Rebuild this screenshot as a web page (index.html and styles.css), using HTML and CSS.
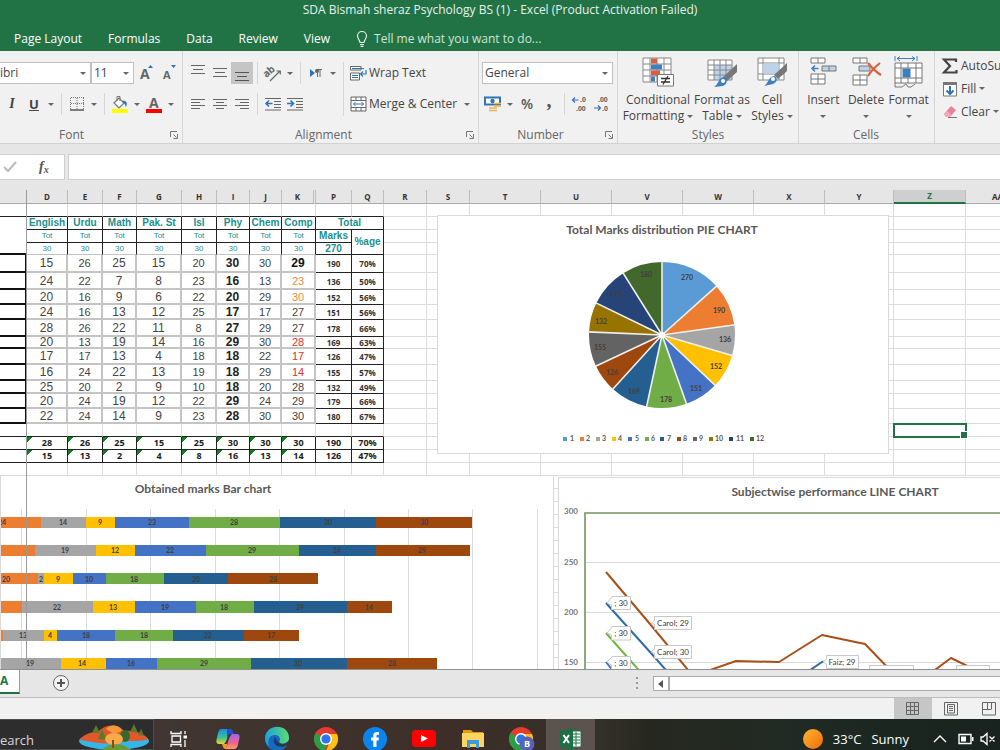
FILE: index.html
```html
<!DOCTYPE html>
<html lang="en">
<head>
<meta charset="utf-8">
<title>SDA Bismah sheraz Psychology BS (1) - Excel</title>
<link rel="stylesheet" href="styles.css">
</head>
<body>
<header class="top">
  <h1 class="title">SDA Bismah sheraz Psychology BS (1) - Excel (Product Activation Failed)</h1>
  <nav class="tabs">
    <a href="#">Page Layout</a><a href="#">Formulas</a><a href="#">Data</a><a href="#">Review</a><a href="#">View</a>
    <a href="#" class="tell"><svg width="12" height="16" viewBox="0 0 12 16" fill="none" stroke="#e4efe8" stroke-width="1.2"><path d="M4 11.500C4 9 1.500 8 1.500 5a4.500 4.500 0 0 1 9 0C10.500 8 8 9 8 11.500ZM4 13.500H8M4.500 15.300H7.500"/></svg>Tell me what you want to do...</a>
  </nav>
</header>

<section class="ribbon">
  <div class="group font">
    <div class="row">
      <span class="pick family"><select aria-label="Font"><option>ibri</option></select></span>
      <span class="pick size"><select aria-label="Font size"><option>11</option></select></span>
      <button class="b grow" aria-label="Increase font size"><svg width="16" height="18"><text x="1" y="15" font-size="14" font-weight="bold" fill="#666">A</text><path d="M9 4L11.500 1L14 4Z" fill="#2f74b5"/></svg></button>
      <button class="b" aria-label="Decrease font size"><svg width="16" height="18"><text x="2" y="15" font-size="11" font-weight="bold" fill="#666">A</text><path d="M10 1H15L12.500 4Z" fill="#2f74b5"/></svg></button>
    </div>
    <div class="row">
      <button class="b ital">I</button><button class="b under">U</button><button class="dd" aria-label="Underline options"></button>
      <i class="sep"></i>
      <button class="b" aria-label="Borders"><svg width="14" height="14"><path d="M1 .5H14M.5 1V12M13.500 1V12M7 1V12M1 6.500H14" stroke="#777" stroke-dasharray="1 1"/><path d="M0 13H14" stroke="#555" stroke-width="1.500"/></svg></button><button class="dd" aria-label="Border options"></button>
      <i class="sep"></i>
      <button class="b" aria-label="Fill color"><svg width="18" height="18"><path d="M3 8L8 3L13 8L8 13Z" fill="#fff" stroke="#777" stroke-width="1.200"/><path d="M6 6V1.500H9V6" fill="none" stroke="#777"/><path d="M11 6C15 5 17 8 15 12C14 10 14 8 11 7Z" fill="#2f74b5"/><path d="M1 14H17V18H1Z" fill="#ff0"/></svg></button><button class="dd" aria-label="Fill options"></button>
      <button class="b" aria-label="Font color"><svg width="18" height="18"><text x="4" y="13" font-size="14" font-weight="bold" fill="#666">A</text><path d="M1 14H17V18H1Z" fill="#f00"/></svg></button><button class="dd" aria-label="Font color options"></button>
    </div>
    <footer>Font<svg class="launch" width="8" height="8"><path d="M.5 6V.5H7M3.500 3.500L6.500 6.500M7.500 3V7.500H3.500" fill="none" stroke="#777"/></svg></footer>
  </div>

  <div class="group align">
    <div class="cols">
      <div class="acol">
        <div class="row">
          <button class="b" aria-label="Top align"><svg width="16" height="16"><path d="M1 .5H15M3 4.500H13M1 8.500H15" stroke="#666"/></svg></button>
          <button class="b" aria-label="Middle align"><svg width="16" height="16"><path d="M1 3.500H15M3 7.500H13M1 11.500H15" stroke="#666"/></svg></button>
          <button class="b on" aria-label="Bottom align"><svg width="16" height="16"><path d="M1 7.500H15M3 11.500H13M1 15.500H15" stroke="#555"/></svg></button>
          <i class="sep"></i>
          <button class="b" aria-label="Orientation"><svg width="18" height="18"><text x="0" y="12" font-size="10" font-weight="bold" fill="#666" transform="rotate(-40 4 10)">ab</text><path d="M6 17L16 7M12.500 7H16.300V10.500" fill="none" stroke="#666" stroke-width="1.200"/></svg></button><button class="dd" aria-label="Orientation options"></button>
          <i class="sep"></i>
          <button class="b" aria-label="Text direction"><svg width="14" height="14"><path d="M1 3L6 7L1 11Z" fill="#2f74b5"/><path d="M8.500 3V11M11 3V11M7 3.500H13" fill="none" stroke="#666"/><circle cx="8" cy="5" r="2" fill="#666"/></svg></button><button class="dd" aria-label="Direction options"></button>
        </div>
        <div class="row">
          <button class="b" aria-label="Align left"><svg width="16" height="14"><path d="M1 2.500H15M1 5.500H10M1 8.500H15M1 11.500H10" stroke="#666"/></svg></button>
          <button class="b" aria-label="Center"><svg width="16" height="14"><path d="M1 2.500H15M4 5.500H12M1 8.500H15M4 11.500H12" stroke="#666"/></svg></button>
          <button class="b" aria-label="Align right"><svg width="16" height="14"><path d="M1 2.500H15M6 5.500H15M1 8.500H15M6 11.500H15" stroke="#666"/></svg></button>
          <i class="sep"></i>
          <button class="b" aria-label="Decrease indent"><svg width="16" height="14"><path d="M0 1.500H16M9 4.500H16M9 7.500H16M9 10.500H16M0 13H16" stroke="#666"/><path d="M7.500 6.500H1M4 3.500L1 6.500L4 9.500" fill="none" stroke="#2f74b5" stroke-width="1.600"/></svg></button>
          <button class="b" aria-label="Increase indent"><svg width="16" height="14"><path d="M0 1.500H16M9 4.500H16M9 7.500H16M9 10.500H16M0 13H16" stroke="#666"/><path d="M0 6.500H6.500M3.500 3.500L6.500 6.500L3.500 9.500" fill="none" stroke="#2f74b5" stroke-width="1.600"/></svg></button>
        </div>
      </div>
      <i class="sep tall"></i>
      <div class="acol">
        <div class="row"><button class="wide"><svg width="17" height="16"><path d="M.5 1.500H11V5H.5ZM.5 8H9.500V15H.5Z" fill="#fff" stroke="#666"/><path d="M2 3.500H14M2 10.500H8M2 12.500H8" stroke="#2f74b5"/><path d="M16 5V9H11M13 6.500L10.500 9L13 11.500" fill="none" stroke="#2f74b5" stroke-width="1.200"/></svg>Wrap Text</button></div>
        <div class="row"><button class="wide"><svg width="17" height="16"><path d="M1 1H16V15H1ZM1 4.500H16M1 11.500H16M6 1V4.500M11 1V4.500M6 11.500V15M11 11.500V15" fill="#fff" stroke="#666"/><path d="M3.500 8H13.500M5.500 6L3.500 8L5.500 10M11.500 6L13.500 8L11.500 10" fill="none" stroke="#2f74b5"/></svg>Merge &amp; Center</button><button class="dd" aria-label="Merge options"></button></div>
      </div>
    </div>
    <footer>Alignment<svg class="launch" width="8" height="8"><path d="M.5 6V.5H7M3.500 3.500L6.500 6.500M7.500 3V7.500H3.500" fill="none" stroke="#777"/></svg></footer>
  </div>

  <div class="group number">
    <div class="row"><span class="pick format"><select aria-label="Number format"><option>General</option></select></span></div>
    <div class="row">
      <button class="b" aria-label="Accounting format"><svg width="18" height="16"><path d="M1 1.500H16V8.500H1Z" fill="#fff" stroke="#2f74b5" stroke-width="2"/><circle cx="8.500" cy="5" r="2.200" fill="#2f74b5"/><path d="M10 7.500H17M10 10H17M5 12H13M5 14.500H13" stroke="#e9b455" stroke-width="1.700"/></svg></button><button class="dd" aria-label="Currency options"></button>
      <button class="b pct">%</button><button class="b comma">,</button>
      <i class="sep"></i>
      <button class="b dec" aria-label="Increase decimal"><svg width="18" height="16"><text x="9" y="6">.0</text><text x="5" y="15">.00</text><path d="M7.500 4H1.500M4 1.500L1.500 4L4 6.500" fill="none" stroke="#2f74b5" stroke-width="1.200"/></svg></button>
      <button class="b dec" aria-label="Decrease decimal"><svg width="18" height="16"><text x="5" y="6">.00</text><text x="9" y="15">.0</text><path d="M1 12H7.500M5 9.500L7.500 12L5 14.500" fill="none" stroke="#2f74b5" stroke-width="1.200"/></svg></button>
    </div>
    <footer>Number<svg class="launch" width="8" height="8"><path d="M.5 6V.5H7M3.500 3.500L6.500 6.500M7.500 3V7.500H3.500" fill="none" stroke="#777"/></svg></footer>
  </div>

  <div class="group styles">
    <div class="bigs">
      <button class="big cond"><svg width="32" height="32"><path d="M1 2H29V26H1ZM1 8H29M1 14H29M1 20H29M8 2V26M15 2V26M22 2V26" fill="#fff" stroke="#888"/><path d="M9 2.500H15V7.500H9ZM9 14.500H18V19.500H9Z" fill="#dd5e3c"/><path d="M9 8.500H20V13.500H9ZM9 20.500H13V25.500H9Z" fill="#3f7fc0"/><path d="M15.500 18.500H31.500V30H15.500Z" fill="#fff" stroke="#777"/><path d="M19 22.500H28M19 26H28M26 20L21 28.500" stroke="#333" stroke-width="1.300"/></svg><span>Conditional<br>Formatting <i class="tri"></i></span></button>
      <button class="big fat"><svg width="32" height="32"><path d="M2 4H26V24H2Z" fill="#fff"/><path d="M8 9H26V24H8Z" fill="#bcd3ea"/><path d="M2 4H26V24H2ZM2 9H26M2 14H26M2 19H26M8 4V24M14 4V24M20 4V24" fill="none" stroke="#888"/><path d="M31 8V16L21 25L17 21Z" fill="#777"/><path d="M18 21C22 22 22 28 17 30L8 31C13 28 12 22 18 21Z" fill="#3f7fc0"/><circle cx="17" cy="25" r="2" fill="#fff"/></svg><span>Format as<br>Table <i class="tri"></i></span></button>
      <button class="big cell"><svg width="32" height="32"><path d="M2 2H28V24H2ZM7 2V24M23 2V24M2 7H28M2 18H28" fill="#fff" stroke="#888"/><path d="M7.500 7.500H22.500V17.500H7.500Z" fill="#bcd3ea"/><path d="M31 7V15L22 23L18 19Z" fill="#777"/><path d="M18 20C22 21 22 26 17 28L8 30C13 27 12 21 18 20Z" fill="#3f7fc0"/><circle cx="17" cy="23" r="2" fill="#fff"/></svg><span>Cell<br>Styles <i class="tri"></i></span></button>
    </div>
    <footer>Styles</footer>
  </div>

  <div class="group cells">
    <div class="bigs">
      <button class="big mid"><svg width="30" height="32"><path d="M3 2H17V7H3ZM10 2V7M3 18H17V28H3ZM10 18V28M3 23H17" fill="#fff" stroke="#777"/><path d="M14 10H28V15H14ZM21 10V15" fill="#bcd3ea" stroke="#777"/><path d="M10.500 12.500H4M7 9.500L4 12.500L7 15.500" fill="none" stroke="#3f7fc0" stroke-width="1.500"/></svg><span>Insert<br><i class="tri"></i></span></button>
      <button class="big mid"><svg width="32" height="32"><path d="M3 2H17V7H3ZM10 2V7M3 19H17V29H3ZM10 19V29M3 24H17" fill="#fff" stroke="#777"/><path d="M9 10H20V15H9Z" fill="#bcd3ea" stroke="#777"/><path d="M18 7C22 12 26 16 31 19M30 7C25 11 21 15 18 20" fill="none" stroke="#dd5e3c" stroke-width="2.200"/></svg><span>Delete<br><i class="tri"></i></span></button>
      <button class="big mid"><svg width="30" height="32"><path d="M1 7H28V27H1ZM7 7V27M22 7V27M1 12H28M1 22H28M14 7V12M14 22V27" fill="#fff" stroke="#777"/><path d="M8.500 12.500H16.500V21.500H8.500Z" fill="#3f7fc0"/><path d="M1 27V31H8L12 28L14 31H17L21 28" fill="none" stroke="#777"/><path d="M1 0V5M23 0V5M3 2.500H21M6 .5L3 2.500L6 5M18 .5L21 2.500L18 5" fill="none" stroke="#3f7fc0"/></svg><span>Format<br><i class="tri"></i></span></button>
    </div>
    <footer>Cells</footer>
  </div>

  <div class="group edit">
    <button class="cmd"><svg width="16" height="16"><path d="M14 4V1.500H2L8 8L2 14.500H14.500V12" fill="none" stroke="#444" stroke-width="2.200"/></svg>AutoSum</button>
    <button class="cmd"><svg width="16" height="16"><path d="M1.500 1.500H14.500V15H1.500Z" fill="#fff" stroke="#777"/><path d="M1 1H15V4H1Z" fill="#777"/><path d="M8 5V13M4.500 9.500L8 13L11.500 9.500" fill="none" stroke="#2f74b5" stroke-width="2"/></svg>Fill <i class="tri"></i></button>
    <button class="cmd"><svg width="16" height="16"><path d="M2 10L9 2L14 6L8 13H4Z" fill="#ea8297"/><path d="M2 10L5 7L10 11L8 13H4Z" fill="#f3a9b7"/><path d="M6 13.500H15" stroke="#777"/></svg>Clear <i class="tri"></i></button>
  </div>
</section>

<section class="formula">
  <div class="fx"><svg width="14" height="12"><path d="M1 6L5 10L13 1" fill="none" stroke="#bbb" stroke-width="2"/></svg><button class="fxb">f<sub>x</sub></button></div>
  <input class="entry" type="text" aria-label="Formula bar">
</section>

<main class="sheet">
<table class="grid">
<colgroup><col class="w27"><col class="w41"><col class="w35"><col class="w34"><col class="w45"><col class="w35"><col class="w33"><col class="w32"><col class="w34"><col class="w36"><col class="w32"><col class="w43"><col class="w43"><col class="w71"><col class="w71"><col class="w71"><col class="w71"><col class="w71"><col class="w69"><col class="w72"><col class="w64"></colgroup>
<thead><tr><th></th><th>D</th><th>E</th><th>F</th><th>G</th><th>H</th><th>I</th><th>J</th><th class="hid">K</th><th>P</th><th>Q</th><th>R</th><th>S</th><th>T</th><th>U</th><th>V</th><th>W</th><th>X</th><th>Y</th><th class="cur">Z</th><th>AA</th></tr></thead>
<tbody class="head">
<tr class="h13 edge"><td><td><td><td><td><td><td><td><td><td><td><td class="o"><td class="o"><td class="o"><td class="o"><td class="o"><td class="o"><td class="o"><td class="o"><td class="o"><td class="o"></tr>
<tr class="h13 sub"><td class="n"><td>English<td>Urdu<td>Math<td>Pak. St<td>Isl<td>Phy<td>Chem<td>Comp<td colspan="2">Total<td class="o"><td class="o"><td class="o"><td class="o"><td class="o"><td class="o"><td class="o"><td class="o"><td class="o"><td class="o"></tr>
<tr class="h13 tot"><td class="n"><td>Tot<td>Tot<td>Tot<td>Tot<td>Tot<td>Tot<td>Tot<td>Tot<td class="m">Marks<td class="m" rowspan="2">%age<td class="o"><td class="o"><td class="o"><td class="o"><td class="o"><td class="o"><td class="o"><td class="o"><td class="o"><td class="o"></tr>
<tr class="h12 tot last"><td class="n k"><td>30<td>30<td>30<td>30<td>30<td>30<td>30<td>30<td class="m">270<td class="o"><td class="o"><td class="o"><td class="o"><td class="o"><td class="o"><td class="o"><td class="o"><td class="o"><td class="o"></tr>
</tbody>
<tbody class="data">
<tr class="h18"><td><td>15<td>26<td>25<td>15<td>20<td>30<td>30<td class="bd">29<td>190<td>70%<td><td><td><td><td><td><td><td><td><td></tr>
<tr class="h17"><td><td>24<td>22<td>7<td>8<td>23<td>16<td>13<td class="or">23<td>136<td>50%<td><td><td><td><td><td><td><td><td><td></tr>
<tr class="h15"><td><td>20<td>16<td>9<td>6<td>22<td>20<td>29<td class="or">30<td>152<td>56%<td><td><td><td><td><td><td><td><td><td></tr>
<tr class="h15"><td><td>24<td>16<td>13<td>12<td>25<td>17<td>17<td>27<td>151<td>56%<td><td><td><td><td><td><td><td><td><td></tr>
<tr class="h17"><td><td>28<td>26<td>22<td>11<td>8<td>27<td>29<td>27<td>178<td>66%<td><td><td><td><td><td><td><td><td><td></tr>
<tr class="h12"><td><td>20<td>13<td>19<td>14<td>16<td>29<td>30<td class="rd">28<td>169<td>63%<td><td><td><td><td><td><td><td><td><td></tr>
<tr class="h16"><td><td>17<td>17<td>13<td>4<td>18<td>18<td>22<td class="rd">17<td>126<td>47%<td><td><td><td><td><td><td><td><td><td></tr>
<tr class="h16"><td><td>16<td>24<td>22<td>13<td>19<td>18<td>29<td class="rd">14<td>155<td>57%<td><td><td><td><td><td><td><td><td><td></tr>
<tr class="h13"><td><td>25<td>20<td>2<td>9<td>10<td>18<td>20<td>28<td>132<td>49%<td><td><td><td><td><td><td><td><td><td></tr>
<tr class="h15"><td><td>20<td>24<td>19<td>12<td>22<td>29<td>24<td>29<td>179<td>66%<td><td><td><td><td><td><td><td><td><td></tr>
<tr class="h15"><td><td>22<td>24<td>14<td>9<td>23<td>28<td>30<td>30<td>180<td>67%<td><td><td><td><td><td><td><td><td><td></tr>
</tbody>
<tbody class="sum">
<tr class="h13 edge"><td><td><td><td><td><td><td><td><td><td><td><td class="o"><td class="o"><td class="o"><td class="o"><td class="o"><td class="o"><td class="o"><td class="o"><td class="o sel"><td class="o"></tr>
<tr class="h13"><td><td>28<td>26<td>25<td>15<td>25<td>30<td>30<td>30<td>190<td>70%<td class="o"><td class="o"><td class="o"><td class="o"><td class="o"><td class="o"><td class="o"><td class="o"><td class="o"><td class="o"></tr>
<tr class="h13"><td><td>15<td>13<td>2<td>4<td>8<td>16<td>13<td>14<td>126<td>47%<td class="o"><td class="o"><td class="o"><td class="o"><td class="o"><td class="o"><td class="o"><td class="o"><td class="o"><td class="o"></tr>
</tbody>
<tbody>
<tr class="h13"><td><td><td><td><td><td><td><td><td><td><td><td><td><td><td><td><td><td><td><td><td></tr>
<tr class="h13"><td colspan="21"></tr><tr class="h13"><td colspan="21"></tr><tr class="h13"><td colspan="21"></tr><tr class="h13"><td colspan="21"></tr><tr class="h13"><td colspan="21"></tr><tr class="h13"><td colspan="21"></tr><tr class="h13"><td colspan="21"></tr><tr class="h13"><td colspan="21"></tr><tr class="h13"><td colspan="21"></tr><tr class="h13"><td colspan="21"></tr><tr class="h13"><td colspan="21"></tr><tr class="h13"><td colspan="21"></tr><tr class="h13"><td colspan="21"></tr><tr class="h13"><td colspan="21"></tr><tr class="h13"><td colspan="21"></tr>
</tbody>
</table>

<svg class="chart pie" width="452" height="239" viewBox="437 215 452 239" role="img" aria-label="Total Marks distribution PIE CHART">
  <text class="ct" x="662" y="234">Total Marks distribution PIE CHART</text>
  <g fill="none" stroke-width="73" transform="rotate(-90 662 335)">
    <circle cx="662" cy="335" r="36.5" pathLength="2018" stroke="#5b9bd5" stroke-dasharray="270 2018"/>
    <circle cx="662" cy="335" r="36.5" pathLength="2018" stroke="#ed7d31" stroke-dasharray="190 2018" stroke-dashoffset="-270"/>
    <circle cx="662" cy="335" r="36.5" pathLength="2018" stroke="#a5a5a5" stroke-dasharray="136 2018" stroke-dashoffset="-460"/>
    <circle cx="662" cy="335" r="36.5" pathLength="2018" stroke="#ffc000" stroke-dasharray="152 2018" stroke-dashoffset="-596"/>
    <circle cx="662" cy="335" r="36.5" pathLength="2018" stroke="#4472c4" stroke-dasharray="151 2018" stroke-dashoffset="-748"/>
    <circle cx="662" cy="335" r="36.5" pathLength="2018" stroke="#70ad47" stroke-dasharray="178 2018" stroke-dashoffset="-899"/>
    <circle cx="662" cy="335" r="36.5" pathLength="2018" stroke="#255e91" stroke-dasharray="169 2018" stroke-dashoffset="-1077"/>
    <circle cx="662" cy="335" r="36.5" pathLength="2018" stroke="#9e480e" stroke-dasharray="126 2018" stroke-dashoffset="-1246"/>
    <circle cx="662" cy="335" r="36.5" pathLength="2018" stroke="#636363" stroke-dasharray="155 2018" stroke-dashoffset="-1372"/>
    <circle cx="662" cy="335" r="36.5" pathLength="2018" stroke="#997300" stroke-dasharray="132 2018" stroke-dashoffset="-1527"/>
    <circle cx="662" cy="335" r="36.5" pathLength="2018" stroke="#264478" stroke-dasharray="179 2018" stroke-dashoffset="-1659"/>
    <circle cx="662" cy="335" r="36.5" pathLength="2018" stroke="#43682b" stroke-dasharray="180 2018" stroke-dashoffset="-1838"/>
  </g>
  <g stroke="#f0f0f0" stroke-width="1.6">
    <path d="M662 335V261"/><path d="M662 335V261" transform="rotate(48.17 662 335)"/><path d="M662 335V261" transform="rotate(82.06 662 335)"/><path d="M662 335V261" transform="rotate(106.32 662 335)"/><path d="M662 335V261" transform="rotate(133.44 662 335)"/><path d="M662 335V261" transform="rotate(160.38 662 335)"/><path d="M662 335V261" transform="rotate(192.13 662 335)"/><path d="M662 335V261" transform="rotate(222.28 662 335)"/><path d="M662 335V261" transform="rotate(244.76 662 335)"/><path d="M662 335V261" transform="rotate(272.41 662 335)"/><path d="M662 335V261" transform="rotate(295.96 662 335)"/><path d="M662 335V261" transform="rotate(327.89 662 335)"/>
  </g>
  <circle cx="662" cy="335" r="3" fill="#fff"/>
  <g class="lb"><text x="687" y="280">270</text><text x="719" y="313">190</text><text x="725" y="342">136</text><text x="716" y="369">152</text><text x="696" y="391">151</text><text x="666" y="402">178</text><text x="634" y="394">169</text><text x="612" y="375">126</text><text x="600" y="350">155</text><text x="601" y="324">132</text><text x="616" y="297">179</text><text x="646" y="277">180</text></g>
  <g><path fill="#5b9bd5" d="M563 437h4v4h-4z"/><path fill="#ed7d31" d="M580 437h4v4h-4z"/><path fill="#a5a5a5" d="M596 437h4v4h-4z"/><path fill="#ffc000" d="M612 437h4v4h-4z"/><path fill="#4472c4" d="M628 437h4v4h-4z"/><path fill="#70ad47" d="M645 437h4v4h-4z"/><path fill="#255e91" d="M660 437h4v4h-4z"/><path fill="#9e480e" d="M677 437h4v4h-4z"/><path fill="#636363" d="M693 437h4v4h-4z"/><path fill="#997300" d="M709 437h4v4h-4z"/><path fill="#264478" d="M729 437h4v4h-4z"/><path fill="#43682b" d="M750 437h4v4h-4z"/></g>
  <g class="lg"><text x="572" y="441">1</text><text x="588" y="441">2</text><text x="604" y="441">3</text><text x="620" y="441">4</text><text x="637" y="441">5</text><text x="653" y="441">6</text><text x="669" y="441">7</text><text x="685" y="441">8</text><text x="701" y="441">9</text><text x="719" y="441">10</text><text x="740" y="441">11</text><text x="760" y="441">12</text></g>
</svg>

<svg class="chart bar" width="554" height="210" viewBox="0 475 554 210" role="img" aria-label="Obtained marks Bar chart">
  <text class="ct" x="203" y="493">Obtained marks Bar chart</text>
  <path d="M21.500 509V685M86.500 509V685M150.500 509V685M215.500 509V685M279.500 509V685M344.500 509V685M408.500 509V685M472.500 509V685M537.500 509V685" stroke="#dcdcdc"/>
  <g fill="#ed7d31"><path d="M0 517H41V528H0zM0 545H35V556H0zM0 573H38V584H0zM0 601H22V613H0zM0 630H3V641H0z"/></g>
  <g fill="#a5a5a5"><path d="M41 517H86V528H41zM35 545H96V556H35zM38 573H44V584H38zM22 601H93V613H22zM3 630H44V641H3zM0 658H61V669H0z"/></g>
  <g fill="#ffc000"><path d="M86 517H115V528H86zM96 545H135V556H96zM44 573H73V584H44zM93 601H135V613H93zM44 630H57V641H44zM61 658H106V669H61z"/></g>
  <g fill="#4472c4"><path d="M115 517H189V528H115zM135 545H206V556H135zM73 573H106V584H73zM135 601H196V613H135zM57 630H115V641H57zM106 658H157V669H106z"/></g>
  <g fill="#70ad47"><path d="M189 517H280V528H189zM206 545H299V556H206zM106 573H164V584H106zM196 601H254V613H196zM115 630H173V641H115zM157 658H251V669H157z"/></g>
  <g fill="#255e91"><path d="M280 517H376V528H280zM299 545H376V556H299zM164 573H228V584H164zM254 601H347V613H254zM173 630H244V641H173zM251 658H347V669H251z"/></g>
  <g fill="#9e480e"><path d="M376 517H472V528H376zM376 545H470V556H376zM228 573H318V584H228zM347 601H392V613H347zM244 630H299V641H244zM347 658H437V669H347z"/></g>
  <g class="lb"><text x="2" y="525">24</text><text x="63" y="525">14</text><text x="100" y="525">9</text><text x="152" y="525">23</text><text x="234" y="525">28</text><text x="328" y="525">30</text><text x="424" y="525">30</text>
  <text x="65" y="553">19</text><text x="115" y="553">12</text><text x="170" y="553">22</text><text x="252" y="553">29</text><text x="337" y="553">24</text><text x="422" y="553">29</text>
  <text x="6" y="582">20</text><text x="41" y="582">2</text><text x="58" y="582">9</text><text x="89" y="582">10</text><text x="134" y="582">18</text><text x="196" y="582">20</text><text x="273" y="582">28</text>
  <text x="57" y="610">22</text><text x="113" y="610">13</text><text x="165" y="610">19</text><text x="224" y="610">18</text><text x="300" y="610">29</text><text x="369" y="610">14</text>
  <text x="23" y="638">13</text><text x="50" y="638">4</text><text x="86" y="638">18</text><text x="144" y="638">18</text><text x="208" y="638">22</text><text x="271" y="638">17</text>
  <text x="30" y="666">19</text><text x="82" y="666">14</text><text x="131" y="666">16</text><text x="204" y="666">29</text><text x="298" y="666">30</text><text x="392" y="666">28</text></g>
</svg>

<svg class="chart line" width="452" height="208" viewBox="558 477 452 208" role="img" aria-label="Subjectwise performance LINE CHART">
  <text class="ct" x="835" y="496">Subjectwise performance LINE CHART</text>
  <path d="M585 562.500H1010M585 612.500H1010M585 662.500H1010" stroke="#d9d9d9"/>
  <path d="M585 685V513H1010" fill="none" stroke="#76935f" stroke-width="1.600"/>
  <g class="ax"><text x="578" y="514">300</text><text x="578" y="565">250</text><text x="578" y="615">200</text><text x="578" y="665">150</text></g>
  <g fill="none" stroke-width="2" stroke-linejoin="round">
    <path d="M606 572L650 624L693 676L736 661L779 662L822 635L865 644L893 673L908 690L951 658L990 677" stroke="#a85018"/>
    <path d="M606 603L650 652L680 686M800 677L822 662L829 661" stroke="#2f6ca3"/>
    <path d="M606 633L652 685" stroke="#70b544"/>
    <path d="M606 662L622 682" stroke="#4472c4"/>
  </g>
  <g fill="#fff" stroke="#c8c8c8">
    <path d="M607 603L612 597V596.500H630.500V609.500H611.500V605Z"/><path d="M607 633L612 627V626.500H630.500V640H611.500V635Z"/><path d="M607 662L612 657V656.500H630.500V670H611.500V665Z"/>
    <path d="M651 624L654.500 620V616.500H691.500V629.500H654.500V624Z"/><path d="M651 652L654.500 649V645.500H691.500V658.500H654.500V653Z"/><path d="M823 662L826.500 659V655.500H858.500V668.500H826.500V664Z"/>
    <path d="M869.500 665.500H913.500V680H869.500ZM956.500 665.500H989.500V680H956.500Z"/>
  </g>
  <g class="lb call"><text x="621" y="606">; 30</text><text x="621" y="636">; 30</text><text x="621" y="666">; 30</text><text x="673" y="626">Carol; 29</text><text x="673" y="655">Carol; 30</text><text x="842" y="665">Faiz; 29</text></g>
</svg>
</main>

<section class="sheetbar">
  <button class="stab">A</button>
  <button class="plus" aria-label="New sheet"><svg width="18" height="18"><circle cx="9" cy="9" r="7.500" fill="#f4f4f4" stroke="#666"/><path d="M5 9H13M9 5V13" stroke="#555" stroke-width="2"/></svg></button>
  <svg class="dots" width="4" height="14"><path d="M1 2H3M1 7H3M1 12H3" stroke="#999" stroke-width="2"/></svg>
  <div class="scroll"><button aria-label="Scroll left"><svg width="8" height="8"><path d="M6 0V8L1 4Z" fill="#555"/></svg></button><div class="track"></div></div>
</section>

<section class="status">
  <button class="view on" aria-label="Normal"><svg width="14" height="14"><path d="M.5 .5H12.500V12.500H.5ZM4.500 .5V12.500M8.500 .5V12.500M.5 4.500H12.500M.5 8.500H12.500" fill="none" stroke="#666"/></svg></button>
  <button class="view" aria-label="Page layout"><svg width="14" height="14"><path d="M.5 .5H13.500V13H.5ZM3.500 2.500H10.500V11H3.500ZM5 4.500H9M5 6.500H9M5 8.500H9" fill="none" stroke="#666"/></svg></button>
  <button class="view" aria-label="Page break preview"><svg width="14" height="14"><path d="M.5 .5H13.500V13H.5ZM5.500 .5V7M9.500 .5V7M.5 7.500H9.500" fill="none" stroke="#666"/></svg></button>
</section>

<footer class="taskbar">
  <div class="search"><span>earch</span>
    <svg width="72" height="27"><ellipse cx="36" cy="17" rx="35" ry="9" fill="#35b6e8"/><path d="M2 16C8 7 18 9 22 6C30 -1 42 1 46 7C56 6 66 9 70 15C60 19 50 15 36 19C24 21 12 17 2 16Z" fill="#e4572a"/><path d="M28 5C33 -1 42 1 44 7L36 10Z" fill="#f59a3c"/><path d="M14 9L18 1L22 9ZM52 8L56 0L60 9ZM60 11L63 5L66 12ZM20 15L24 5L29 16Z" fill="#5b7a2a"/><ellipse cx="47" cy="12" rx="5" ry="6" fill="#35682f"/><ellipse cx="36" cy="15" rx="9" ry="6" fill="#fba94a"/><path d="M24 27C26 20 44 16 54 27Z" fill="#6d9a35"/><path d="M35 16V24" stroke="#8a4a1c" stroke-width="2"/></svg></div>
  <button class="app" aria-label="Task view"><svg width="18" height="18" fill="none" stroke="#fff" stroke-width="1.300"><path d="M1 1V3.500H11V1M1 17V14.500H11V17M2 6H10.500V12H2ZM15 1V4M15 10V17"/><path d="M13.500 5.500H17V8.500H13.500Z" fill="#fff" stroke="none"/></svg></button>
  <button class="app" aria-label="Copilot"><svg width="26" height="24"><defs><linearGradient id="ca" x1="0" y1="0" x2="0" y2="1"><stop offset="0" stop-color="#1b8be8"/><stop offset=".6" stop-color="#3fc58e"/><stop offset="1" stop-color="#f4d02c"/></linearGradient><linearGradient id="cb" x1="0" y1="0" x2="0" y2="1"><stop offset="0" stop-color="#a063f0"/><stop offset=".6" stop-color="#f06292"/><stop offset="1" stop-color="#fda057"/></linearGradient></defs><path d="M6 2H16C13 4 13 14 9 17H4C1 17 1 14 2 11C3 7 3 3 6 2Z" fill="url(#ca)"/><path d="M20 22H10C13 20 13 10 17 7H22C25 7 25 10 24 13C23 17 23 21 20 22Z" fill="url(#cb)"/><path d="M12 2H15C18 2 18 5 19 7H15C13 7 13 9 12 12Z" fill="#2450cf"/><path d="M8 17H12L13 14L11 22C8 22 8 19 7 17Z" fill="#ef9a2b"/></svg></button>
  <button class="app" aria-label="Edge"><svg width="26" height="26"><defs><linearGradient id="eg" x1="0" x2="1"><stop offset="0" stop-color="#1f9fe0"/><stop offset="1" stop-color="#5bdc6b"/></linearGradient></defs><circle cx="13" cy="13" r="12" fill="#1669bd"/><path d="M1 12C2 -3 25 -3 25 12C25 17 18 19 15 16C17 14 16 9 11 9C6 9 3 13 5 20C2 18 1 15 1 12Z" fill="url(#eg)"/><path d="M11 11C8 15 10 21 19 21L24 18C20 19 15 19 14 16Z" fill="#123f77"/><path d="M15 16C17 20 22 18 25 15L25 19L19 20C15 20 12 18 15 16Z" fill="#3e332c"/></svg></button>
  <button class="app" aria-label="Chrome"><svg width="26" height="26"><circle cx="13" cy="13" r="12" fill="#e33b2e"/><path d="M2.600 7L13 13L13 25A12 12 0 0 1 2.600 7Z" fill="#2a9d47"/><path d="M13 25L18 13L13 8H24A12 12 0 0 1 13 25Z" fill="#fbc116"/><circle cx="13" cy="13" r="6" fill="#fff"/><circle cx="13" cy="13" r="4.600" fill="#2f75e8"/></svg></button>
  <button class="app" aria-label="Facebook"><svg width="26" height="26"><circle cx="13" cy="13" r="12" fill="#0b84ee"/><path d="M11.300 21V14.500H9V11.500H11.300V9.500C11.300 6.500 13.500 5.600 17 6.200V8.900C15 8.700 14.500 9 14.500 10.200V11.500H17L16.500 14.500H14.500V21Z" fill="#fff"/></svg></button>
  <button class="app" aria-label="YouTube"><svg width="26" height="20"><rect x="1" y="1" width="24" height="17" rx="4" fill="#f00"/><path d="M10 6L17 9.500L10 13Z" fill="#fff"/></svg></button>
  <button class="app" aria-label="File Explorer"><svg width="24" height="22"><path d="M2 2H10L12 4H22V19H2Z" fill="#e09a10"/><path d="M1 5H23V19H1Z" fill="#fcd462"/><path d="M6 12H18V20H15V16H9V20H6Z" fill="#3b9bdc"/></svg></button>
  <button class="app" aria-label="Chrome profile B"><svg width="28" height="26"><circle cx="13" cy="13" r="12" fill="#e33b2e"/><path d="M2.600 7L13 13L13 25A12 12 0 0 1 2.600 7Z" fill="#2a9d47"/><path d="M13 25L18 13L13 8H24A12 12 0 0 1 13 25Z" fill="#fbc116"/><circle cx="13" cy="13" r="6" fill="#fff"/><circle cx="13" cy="13" r="4.600" fill="#2f75e8"/><circle cx="19" cy="18" r="7.500" fill="#5763b5"/><text x="16" y="21" font-size="9" font-weight="bold" fill="#fff">B</text></svg></button>
  <button class="app on" aria-label="Excel"><svg width="24" height="22"><path d="M12 3H22V19H12Z" fill="#fff" stroke="#1d7044"/><path d="M13 6H21M13 9H21M13 12H21M13 15H21M17 4V18" stroke="#1d7044"/><path d="M1 3L14 0V22L1 19Z" fill="#1d7044"/><path d="M4.500 7L10 15M10 7L4.500 15" stroke="#fff" stroke-width="2"/></svg></button>
  <div class="tray">
    <svg width="22" height="22"><defs><linearGradient id="sn" x1="0" y1="0" x2="1" y2="1"><stop offset="0" stop-color="#fdb72c"/><stop offset="1" stop-color="#f3690f"/></linearGradient></defs><circle cx="11" cy="11" r="10" fill="url(#sn)"/></svg>
    <span class="temp">33°C</span><span class="sky">Sunny</span>
    <svg width="14" height="10" fill="none" stroke="#fff" stroke-width="1.400"><path d="M1 8L7 2L13 8"/></svg>
    <svg class="bat" width="16" height="12"><path d="M1 1.500H13V10.500H1Z" fill="none" stroke="#fff" stroke-width="1.400"/><path d="M3 3.500H8V8.500H3ZM14 4H15.500V8H14Z" fill="#fff"/></svg>
    <svg class="spk" width="16" height="14" fill="none" stroke="#fff" stroke-width="1.300"><path d="M1 5H3L7 1.500V12.500L3 9H1ZM9.500 4.500L14.500 9.500M14.500 4.500L9.500 9.500"/></svg>
  </div>
</footer>
</body>
</html>
```
FILE: styles.css
```css
* { box-sizing: border-box; }
body {
  margin: 0;
  height: 100vh;
  display: flex;
  flex-direction: column;
  overflow: hidden;
  font: 12px/16px "Open Sans", "Noto Sans", sans-serif;
  color: #444;
  background: #e6e6e6;
}
button { border: 0; padding: 0; margin: 0; background: none; font: inherit; color: inherit; }
svg { display: block; flex: none; }
i { font-style: normal; }

/* title and tabs */
.top { background: #217346; color: #fff; flex: none; }
.title { margin: 0; font-size: 12px; line-height: 20px; font-weight: 400; text-align: center; color: #e8f2ec; }
.tabs { display: flex; gap: 26px; padding: 9px 14px 2px; line-height: 20px; white-space: nowrap; }
.tabs a { color: #fff; text-decoration: none; }
.tabs .tell { display: flex; align-items: center; gap: 6px; color: #cfe3d7; }

/* ribbon */
.ribbon { display: flex; flex: none; height: 93px; background: #f1f1f1; border-bottom: 1px solid #d2d2d2; overflow: hidden; white-space: nowrap; }
.ribbon svg { overflow: visible; }
.group { position: relative; flex: none; display: flex; flex-direction: column; gap: 9px; padding: 11px 4px 0; border-right: 1px solid #d6d6d6; }
.group footer { margin-top: auto; text-align: center; color: #666; }
.launch { position: absolute; right: 4px; bottom: 4px; }
.font { width: 183px; padding-left: 1px; padding-right: 0; }
.font footer { padding-right: 40px; }
.align { width: 296px; }
.align footer { padding-right: 14px; }
.number { width: 139px; padding-left: 3px; }
.number footer { padding-right: 14px; }
.styles { width: 181px; gap: 0; }
.cells { width: 136px; gap: 0; padding-left: 3px; }
.edit { flex: 1 0 66px; padding: 3px 0 0 7px; gap: 0; border: 0; }
.row { display: flex; align-items: center; height: 22px; }
.b { width: 22px; height: 22px; display: flex; align-items: center; justify-content: center; }
.b.on { background: #c5c5c5; }
.grow { margin-left: 2px; }
.sep { width: 1px; height: 22px; background: #d6d6d6; margin: 0 4px; flex: none; }
.sep.tall { height: 54px; margin-right: 3px; }
.cols { display: flex; }
.acol { display: flex; flex-direction: column; gap: 9px; }
.dd { width: 12px; height: 22px; display: flex; align-items: center; justify-content: center; }
.dd::after, .tri { content: ""; display: inline-block; border: 3px solid transparent; border-top-color: #666; border-bottom: 0; vertical-align: middle; }
.ital { font: italic bold 14px "Liberation Serif", serif; }
.under { font-weight: 700; font-size: 13px; text-decoration: underline; }
.pct { font-size: 14px; font-weight: 600; color: #555; }
.comma { font: bold 20px/10px "Liberation Serif", serif; padding-bottom: 8px; color: #555; }
.dec text { font: bold 7px "Liberation Sans", sans-serif; fill: #555; }
.pick { position: relative; display: block; }
.pick::after { content: ""; position: absolute; right: 5px; top: 10px; border: 3px solid transparent; border-top-color: #666; border-bottom: 0; }
.pick select { appearance: none; width: 100%; height: 22px; border: 1px solid #c0c0c0; border-radius: 0; background: #fff; font: inherit; color: #444; padding: 0 2px; }
.family { width: 91px; margin-left: -1px; }
.family select { border-left: 0; padding: 0; }
.size { width: 43px; }
.format { width: 131px; }
.wide { display: flex; align-items: center; gap: 2px; padding-left: 3px; }
.wide + .dd { margin-left: 4px; }
.bigs { display: flex; margin-top: -6px; }
.big { display: flex; flex-direction: column; align-items: center; gap: 4px; text-align: center; line-height: 16px; }
.cond { width: 72px; }
.fat { width: 56px; }
.cell { width: 44px; }
.mid { width: 43px; }
.cmd { display: flex; align-items: center; gap: 3px; height: 23px; }

/* formula bar */
.formula { display: flex; gap: 3px; padding: 10px 0 10px; flex: none; height: 46px; }
.fx { width: 65px; background: #fff; border: 1px solid #cfcfcf; border-left: 0; display: flex; align-items: center; gap: 22px; padding-left: 3px; }
.fxb { font: italic bold 14px "Liberation Serif", serif; color: #555; }
.fxb sub { font-size: 10px; vertical-align: -2px; }
.entry { flex: 1; border: 1px solid #cfcfcf; border-right: 0; background: #fff; min-width: 0; padding: 0 4px; }

/* worksheet */
.sheet { position: relative; flex: 1; min-height: 0; overflow: hidden; background: #fff; }
.sheet::after { content: ""; position: absolute; left: 26px; top: 0; bottom: 0; width: 1px; background: #999; }
.grid { table-layout: fixed; width: 1030px; border-collapse: separate; border-spacing: 0; text-align: center; font: 11px/10px "Liberation Sans", sans-serif; color: #444; }
.grid td, .grid th { padding: 0; border-right: 1px solid #dcdcdc; border-bottom: 1px solid #dcdcdc; overflow: hidden; white-space: nowrap; }
.grid th { height: 14px; background: #e6e6e6; border-right-color: #bdbdbd; border-bottom-color: #aaa; font: bold 8px/10px "Open Sans", sans-serif; color: #333; }
.grid th.cur { background: #cfcfcf; color: #217346; border-bottom: 2px solid #217346; }
.grid th.hid { border-right: 3px double #bdbdbd; }
.w27 { width: 27px; } .w41 { width: 41px; } .w35 { width: 35px; } .w34 { width: 34px; } .w45 { width: 45px; }
.w33 { width: 33px; } .w32 { width: 32px; } .w36 { width: 36px; } .w43 { width: 43px; } .w71 { width: 71px; }
.w69 { width: 69px; } .w72 { width: 72px; } .w64 { width: 64px; }
.h12 td { height: 12px; } .h13 td { height: 13px; } .h15 td { height: 15px; }
.h16 td { height: 16px; } .h17 td { height: 17px; } .h18 td { height: 18px; }
.grid .edge td:not(.o) { border-bottom-color: #222; }
.head .sub td:not(.o), .head .tot td:not(.o) { border-color: #222; font-weight: 700; font-size: 10px; color: #1a9090; }
.head .tot td:not(.o):not(.m) { font-weight: 400; font-size: 8px; }
.head .last td:not(.o):not(.m):not(.k) { border-bottom-color: #c4c4c4; }
.grid .head td.n { border-bottom-color: #fff; }
.grid .head td.k { border-bottom: 2px solid #111; }
.data td:nth-child(-n+9) { border-right: 2px solid #c4c4c4; border-bottom: 2px solid #c4c4c4; }
.data td:nth-child(2), .data td:nth-child(4), .data td:nth-child(5), .data td:nth-child(7) { font-size: 12px; }
.data td:first-child { border-color: #111; }
.data td:nth-child(7) { font-weight: 700; color: #222; }
.data td:nth-child(10), .data td:nth-child(11) { border-color: #222; font: bold 8px/9px "Open Sans", sans-serif; color: #333; }
.data .bd { font-weight: 700; font-size: 12px; color: #111; }
.data .or { color: #f08a45; }
.data .rd { color: #dc3030; }
.sum tr:not(.edge) td:not(.o) { border-color: #222; font: bold 9px/10px "Open Sans", sans-serif; color: #222; }
.sum tr:not(.edge) td:nth-child(n+2):nth-child(-n+9) { background: linear-gradient(135deg, #12801e 4px, transparent 4px); }
.grid td.sel { position: relative; overflow: visible; outline: 2px solid #217346; outline-offset: -1px; }
.grid td.sel::after { content: ""; position: absolute; right: -3px; bottom: -3px; width: 6px; height: 6px; background: #217346; border: 1px solid #fff; }

/* charts float over the cells */
.chart { position: absolute; background: #fff; outline: 1px solid #d9d9d9; outline-offset: -1px; }
.pie { left: 437px; top: 25px; }
.bar { left: 0; top: 285px; }
.line { left: 558px; top: 287px; }
.chart text { font-family: Lato, "Open Sans", sans-serif; }
.ct { font-size: 12px; font-weight: 700; fill: #595959; text-anchor: middle; }
.lb text { font-size: 7px; font-weight: 700; fill: #404040; text-anchor: middle; }
.lb.call text { font-size: 8px; font-weight: 400; }
.lg text { font-size: 7px; font-weight: 700; fill: #595959; text-anchor: middle; }
.ax text { font-size: 8px; font-weight: 700; fill: #777; text-anchor: end; }

/* bottom bars */
.sheetbar { display: flex; align-items: flex-start; flex: none; height: 29px; background: #e6e6e6; border-top: 1px solid #8f8f8f; border-bottom: 1px solid #bdbdbd; }
.stab { width: 20px; height: 24px; background: #fff; border-right: 1px solid #999; border-bottom: 2px solid #217346; color: #217346; font-weight: 700; text-align: left; }
.plus { margin: 4px 0 0 32px; }
.dots { margin: 6px 14px 0 auto; }
.scroll { display: flex; flex: 0 0 347px; height: 15px; margin-top: 6px; }
.scroll button { width: 16px; background: #fff; border: 1px solid #aaa; display: flex; align-items: center; justify-content: center; }
.track { flex: 1; background: #fff; border: 1px solid #aaa; border-right: 0; }
.status { display: flex; justify-content: flex-end; flex: none; height: 21px; background: #f1f1f1; }
.view { width: 38px; display: flex; align-items: center; justify-content: center; }
.view:last-child { width: 30px; padding-left: 8px; }
.view.on { background: #c6c6c6; }

.taskbar { display: flex; flex: none; height: 31px; overflow: hidden; background: linear-gradient(90deg, #433a36 0, #3d2f28 45%, #34302a 60%, #26281f 65%, #202a24 80%, #18221e); color: #fff; }
.search { width: 154px; background: #2d2d2e; border: 1px solid #4c4c4c; border-left: 0; display: flex; justify-content: space-between; padding: 4px 3px 0 0; font-size: 13px; line-height: 32px; color: #d8d8d8; flex: none; }
.app { width: 49px; height: 40px; display: flex; align-items: center; justify-content: center; flex: none; }
.app.on { background: #5c534e; }
.tray { margin-left: auto; height: 40px; display: flex; align-items: center; font-size: 13px; padding-right: 4px; }
.temp { margin: 0 10px 0 9px; }
.sky { margin-right: 24px; }
.bat { margin-left: 11px; }
.spk { margin-left: 6px; }
```
